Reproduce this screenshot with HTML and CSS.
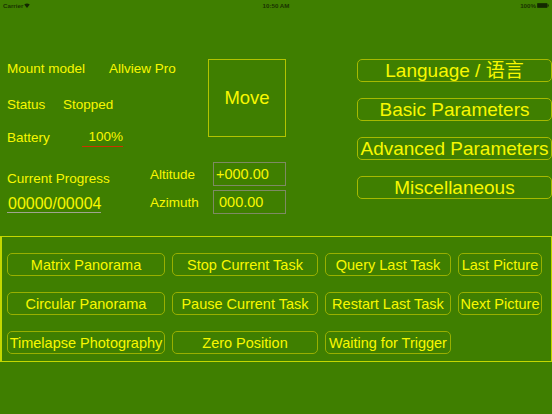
FILE: index.html
```html
<!DOCTYPE html>
<html>
<head>
<meta charset="utf-8">
<link rel="stylesheet" href="styles.css">
</head>
<body>
<div class="screen">
  <div class="statusbar">
    <div class="sb-left">
      <span>Carrier</span>
      <svg class="wifi" width="6" height="5" viewBox="0 0 12 10"><path d="M6 10 L0.5 3.2 A8.5 8.5 0 0 1 11.5 3.2 Z" fill="#142800"/></svg>
    </div>
    <div class="sb-center">10:50 AM</div>
    <div class="sb-right">
      <span>100%</span>
      <svg class="battery" width="12" height="5" viewBox="0 0 24 10"><rect x="0.5" y="0.5" width="20" height="9" rx="1.5" fill="#142800" stroke="#142800"/><rect x="21.5" y="3" width="2" height="4" fill="#142800"/></svg>
    </div>
  </div>

  <div class="top">
    <div class="left-area">
      <div class="row-a">
        <div class="info">
          <div class="line l1"><span class="label w-mount">Mount model</span><span>Allview Pro</span></div>
          <div class="line l2"><span class="label w-status">Status</span><span>Stopped</span></div>
          <div class="line l3"><span class="label w-battery">Battery</span><span class="battery-field">100%</span></div>
        </div>
        <div class="move">Move</div>
      </div>
      <div class="row-b">
        <div class="progress">
          <div class="progress-title">Current Progress</div>
          <div class="progress-value">00000/00004</div>
        </div>
        <div class="coords">
          <span class="coord-label">Altitude</span>
          <div class="field">+000.00</div>
          <span class="coord-label">Azimuth</span>
          <div class="field field-az">000.00</div>
        </div>
      </div>
    </div>
    <div class="menu">
      <div class="menu-btn">Language / <span class="cjk">语言</span></div>
      <div class="menu-btn">Basic Parameters</div>
      <div class="menu-btn">Advanced Parameters</div>
      <div class="menu-btn">Miscellaneous</div>
    </div>
  </div>

  <div class="panel">
    <div class="btn">Matrix Panorama</div>
    <div class="btn">Stop Current Task</div>
    <div class="btn">Query Last Task</div>
    <div class="btn">Last Picture</div>
    <div class="btn">Circular Panorama</div>
    <div class="btn">Pause Current Task</div>
    <div class="btn">Restart Last Task</div>
    <div class="btn">Next Picture</div>
    <div class="btn">Timelapse Photography</div>
    <div class="btn">Zero Position</div>
    <div class="btn">Waiting for Trigger</div>
  </div>
</div>
</body>
</html>
```

FILE: styles.css
```css
html, body {
  margin: 0;
  padding: 0;
  background: #3f7f00;
}

.screen {
  width: 552px;
  height: 414px;
  background: #3f7f00;
  color: #f8f800;
  font-family: "Liberation Sans", Arial, sans-serif;
  overflow: hidden;
}

.statusbar {
  height: 10px;
  display: grid;
  grid-template-columns: 1fr auto 1fr;
  align-items: center;
  padding: 0 3px;
  font-size: 6.2px;
  font-weight: 700;
  color: #1a3300;
}

.sb-left {
  display: flex;
  align-items: center;
  gap: 1px;
}

.sb-center {
  text-align: center;
}

.sb-right {
  display: flex;
  justify-content: flex-end;
  align-items: center;
  gap: 1px;
}

.top {
  display: flex;
  height: 226px;
  padding-top: 49px;
  box-sizing: border-box;
}

.left-area {
  width: 357px;
  flex: none;
}

.row-a {
  display: flex;
  height: 103px;
}

.info {
  width: 208px;
  padding-left: 7px;
  box-sizing: border-box;
}

.line {
  display: flex;
  height: 20px;
  line-height: 20px;
  font-size: 13.5px;
  white-space: nowrap;
}

.l2 { margin-top: 16px; }
.l3 { margin-top: 13px; }

.label { flex: none; }
.w-mount { width: 102px; }
.w-status { width: 56px; }
.w-battery { width: 75px; }

.battery-field {
  width: 41px;
  height: 18px;
  line-height: 18px;
  text-align: right;
  border-bottom: 1px solid #cc3300;
}

.move {
  width: 78px;
  height: 78px;
  border: 1px solid #b2c400;
  box-sizing: border-box;
  display: flex;
  align-items: center;
  justify-content: center;
  font-size: 18.5px;
}

.row-b {
  display: flex;
  height: 52px;
}

.progress {
  width: 150px;
  padding-left: 7px;
  box-sizing: border-box;
  flex: none;
}

.progress-title {
  margin-top: 7px;
  line-height: 20px;
  font-size: 13.5px;
  white-space: nowrap;
}

.progress-value {
  display: inline-block;
  margin-top: 7px;
  font-size: 16px;
  line-height: 16px;
  padding-left: 1px;
  border-bottom: 1px solid #a0a490;
}

.coords {
  display: grid;
  grid-template-columns: 63px 73px;
  grid-auto-rows: 24px;
  row-gap: 4px;
  align-items: center;
}

.coord-label {
  font-size: 13.5px;
}

.field {
  height: 24px;
  border: 1px solid #7e8a64;
  box-sizing: border-box;
  font-size: 14.5px;
  line-height: 22px;
  padding-left: 2px;
}

.field-az {
  padding-left: 5px;
}

.menu {
  width: 195px;
  display: flex;
  flex-direction: column;
  gap: 16px;
}

.menu-btn {
  height: 23px;
  border: 1px solid #a6ba00;
  border-radius: 5px;
  box-sizing: border-box;
  font-size: 19px;
  line-height: 21px;
  text-align: center;
  white-space: nowrap;
}

.cjk {
  font-family: "Liberation Sans", "Noto Sans CJK SC", sans-serif;
}

.panel {
  height: 126px;
  box-sizing: border-box;
  border: 1px solid #c4d800;
  border-left-width: 2px;
  padding: 16px 0 0 5px;
  display: grid;
  grid-template-columns: 158px 146px 126px 84px;
  grid-auto-rows: 23px;
  column-gap: 7px;
  row-gap: 16px;
}

.btn {
  border: 1px solid #98b000;
  border-radius: 5px;
  box-sizing: border-box;
  font-size: 14.5px;
  line-height: 21px;
  padding-top: 1px;
  text-align: center;
  white-space: nowrap;
}
```
